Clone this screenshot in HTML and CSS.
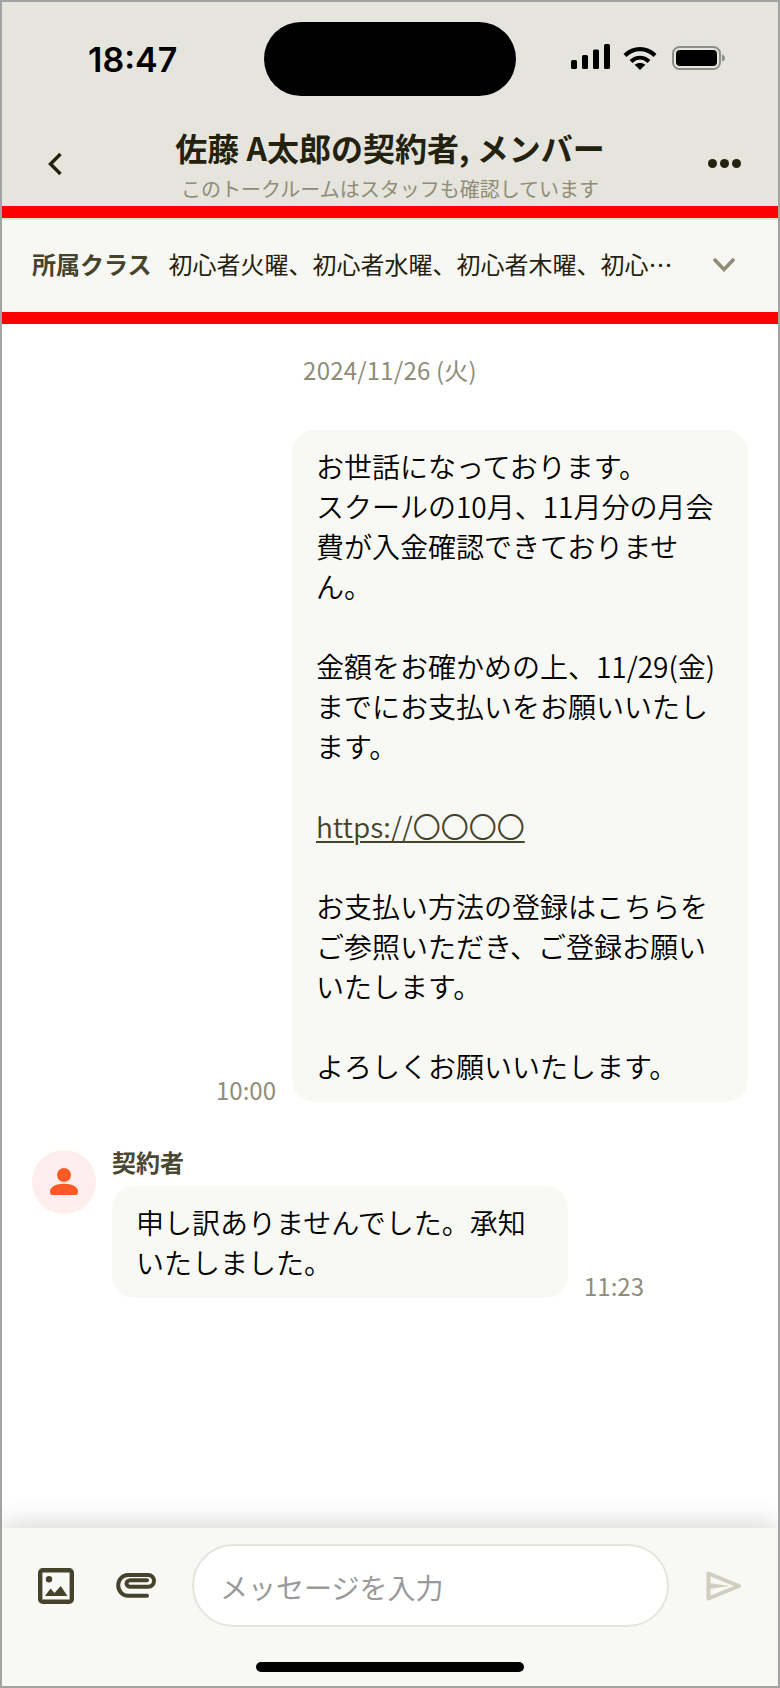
FILE: index.html
```html
<!DOCTYPE html>
<html lang="ja">
<head>
<meta charset="utf-8">
<title>トークルーム</title>
<link rel="stylesheet" href="styles.css">
</head>
<body>
<div class="frame">
  <header class="top">
    <div class="status">
      <span class="clock">18:47</span>
      <div class="island"></div>
      <div class="status-icons">
        <svg class="i-signal" viewBox="0 0 39 25"><rect x="0" y="16" width="6" height="9" rx="1.5"/><rect x="11" y="11" width="6" height="14" rx="1.5"/><rect x="22" y="5.500" width="6" height="19.500" rx="1.5"/><rect x="33" y="0" width="6" height="25" rx="1.5"/></svg>
        <svg class="i-wifi" viewBox="0 0 34 24"><path d="M2 9.500C10.500 1 23.500 1 32 9.500" fill="none" stroke="#000" stroke-width="4.200"/><path d="M8 15.500C13.500 10.500 20.500 10.500 26 15.500" fill="none" stroke="#000" stroke-width="4.200"/><path d="M11.700 18.800C14.700 16.300 19.300 16.300 22.300 18.800L17 24Z"/></svg>
        <svg class="i-battery" viewBox="0 0 53 24"><rect x="1" y="1" width="47" height="22" rx="6.500" fill="none" stroke="#8e8e8a" stroke-width="2"/><rect x="4" y="4" width="41" height="16" rx="4"/><path d="M50 8.500C52 9 53 10.500 53 12S52 15 50 15.500Z" fill="#8e8e8a"/></svg>
      </div>
    </div>
    <div class="navbar">
      <svg class="i-back" viewBox="0 0 16 24"><path d="M13.500 2L3.500 12L13.500 22" fill="none" stroke="#24220e" stroke-width="3.400"/></svg>
      <div class="heading">
        <h1 class="title">佐藤 A太郎の契約者, メンバー</h1>
        <p class="subtitle">このトークルームはスタッフも確認しています</p>
      </div>
      <div class="dots"><i></i><i></i><i></i></div>
    </div>
  </header>

  <section class="classbar">
    <span class="class-label">所属クラス</span>
    <span class="class-list">初心者火曜、初心者水曜、初心者木曜、初心…</span>
    <svg class="i-chevron" viewBox="0 0 24 15"><path d="M2 2L12 12.500L22 2" fill="none" stroke="#8f8c78" stroke-width="3.600"/></svg>
  </section>

  <main class="chat">
    <p class="date">2024/11/26 (火)</p>
    <div class="row row-out">
      <time class="stamp">10:00</time>
      <div class="bubble">お世話になっております。<br>スクールの10月、11月分の月会費が入金確認できておりません。<br><br>金額をお確かめの上、11/29(金)までにお支払いをお願いいたします。<br><br><a class="link" href="#">https://〇〇〇〇</a><br><br>お支払い方法の登録はこちらをご参照いただき、ご登録お願いいたします。<br><br>よろしくお願いいたします。</div>
    </div>
    <div class="row row-in">
      <div class="avatar">
        <svg viewBox="0 0 28 28"><circle cx="14" cy="7" r="7"/><path d="M0 23.500C0 18.500 6 15.700 14 15.700S28 18.500 28 23.500V24.500C28 26 27 27 25.500 27H2.500C1 27 0 26 0 24.500Z"/></svg>
      </div>
      <div class="incoming">
        <div class="sender">契約者</div>
        <div class="incoming-line">
          <div class="bubble">申し訳ありませんでした。承知いたしました。</div>
          <time class="stamp">11:23</time>
        </div>
      </div>
    </div>
  </main>

  <footer class="composer">
    <div class="composer-row">
      <svg class="i-image" viewBox="0 0 36 36"><rect x="2.200" y="2.200" width="31.600" height="31.600" rx="2.500" fill="none" stroke="#45432c" stroke-width="4.400"/><circle cx="11" cy="11.300" r="3.200" fill="#45432c"/><path d="M7 28L12.500 20.500L16.500 25L22.700 18L29.500 28Z" fill="#45432c"/></svg>
      <svg class="i-clip" viewBox="0 0 40 25"><path d="M31 22.700H12C6 22.700 2.200 17.500 2.200 12.300S6 2 12 2H32C36 2 38 4.800 38 7.800S36 13.800 32 13.800H14.500C12 13.800 10.500 12 10.500 10.500S12 7.300 14.500 7.300H31" fill="none" stroke="#45432c" stroke-width="4" stroke-linecap="round"/></svg>
      <div class="field">メッセージを入力</div>
      <svg class="i-send" viewBox="0 0 36 30"><path d="M2.500 2.500L33 15L2.500 27.500Z" fill="none" stroke="#cfcebf" stroke-width="4" stroke-linejoin="round"/><path d="M2.500 12L24 15L2.500 18Z" fill="#cfcebf"/></svg>
    </div>
    <div class="home-bar"></div>
  </footer>
</div>
</body>
</html>
```

FILE: styles.css
```css
* { box-sizing: border-box; }
html, body { margin: 0; padding: 0; }
body {
  width: 780px;
  height: 1688px;
  background: #fff;
  font-family: "Noto Sans CJK JP", "Noto Sans", sans-serif;
  color: #111;
}
.frame {
  width: 780px;
  height: 1688px;
  border: 2px solid #a3a3a3;
  display: flex;
  flex-direction: column;
  overflow: hidden;
}

/* header */
.top { background: #e5e4dd; height: 204px; flex: none; }
.status {
  height: 108px;
  position: relative;
  display: flex;
  align-items: flex-start;
  justify-content: space-between;
  padding: 0 0 0 86px;
}
.clock {
  font-family: Inter, sans-serif;
  font-weight: 600;
  font-size: 34px;
  line-height: 40px;
  margin-top: 38px;
  color: #000;
}
.island {
  position: absolute;
  left: 262px;
  top: 20px;
  width: 252px;
  height: 74px;
  border-radius: 37px;
  background: #000;
}
.status-icons {
  display: flex;
  align-items: flex-start;
  gap: 13px;
  padding-right: 53px;
  margin-top: 42px;
}
.i-signal { width: 39px; height: 25px; }
.i-wifi { width: 34px; height: 24px; margin-top: 2px; }
.i-battery { width: 53px; height: 24px; margin-top: 2px; margin-left: 2px; }

.navbar {
  height: 96px;
  display: flex;
  align-items: flex-start;
  justify-content: space-between;
  padding: 0 37px 0 45px;
}
.i-back { width: 16px; height: 24px; margin-top: 42px; flex: none; }
.heading { text-align: center; flex: 1; padding-left: 9px; }
.title {
  margin: 15px 0 0;
  font-size: 32px;
  line-height: 44px;
  font-weight: 700;
  color: #24220e;
}
.subtitle {
  margin: 5px 0 0;
  font-size: 20px;
  line-height: 30px;
  color: #8f8c78;
}
.dots { display: flex; gap: 3px; margin-top: 49px; flex: none; }
.dots i { width: 9px; height: 9px; border-radius: 50%; background: #24220e; }

/* class bar */
.classbar {
  height: 118px;
  flex: none;
  border-top: 12px solid #ff0000;
  border-bottom: 12px solid #ff0000;
  background: #f7f8f4;
  box-shadow: inset 0 2px 0 #e5e4dd;
  display: flex;
  align-items: center;
  padding: 0 42px 2px 30px;
  font-size: 24px;
  line-height: 36px;
}
.class-label { font-weight: 700; color: #45432c; flex: none; margin-right: 17px; }
.class-list { white-space: nowrap; color: #24220e; flex: none; }
.i-chevron { width: 24px; height: 15px; margin-left: auto; flex: none; }

/* chat */
.chat { flex: 1; background: #fff; padding: 28px 30px 0; }
.date {
  margin: 0 0 42px;
  text-align: center;
  font-size: 24px;
  line-height: 36px;
  letter-spacing: 0.2px;
  color: #8f8c78;
}
.row { display: flex; }
.row-out { justify-content: flex-end; align-items: flex-end; gap: 16px; }
.row-in { margin-top: 48px; gap: 16px; }
.bubble {
  width: 456px;
  background: #f8f9f5;
  border-radius: 22px;
  padding: 16px 24px;
  font-size: 28px;
  line-height: 40px;
  font-weight: 350;
  color: #000;
}
.stamp { font-size: 24px; line-height: 24px; color: #8f8c78; flex: none; }
.link { color: #45432c; text-decoration: underline; text-underline-offset: 3px; text-decoration-thickness: 1.5px; }
.avatar {
  width: 64px;
  height: 64px;
  border-radius: 50%;
  background: #ffeeeb;
  flex: none;
  display: flex;
  align-items: center;
  justify-content: center;
}
.avatar svg { width: 28px; height: 28px; fill: #ff5a26; }
.incoming { display: flex; flex-direction: column; }
.sender {
  font-size: 24px;
  line-height: 24px;
  margin-bottom: 12px;
  font-weight: 700;
  color: #4a4833;
}
.incoming-line { display: flex; align-items: flex-end; gap: 16px; }

/* composer */
.composer {
  flex: none;
  height: 158px;
  background: #f8f9f5;
  box-shadow: 0 -6px 24px rgba(0, 0, 0, 0.14);
  position: relative;
}
.composer-row {
  display: flex;
  align-items: center;
  height: 83px;
  padding-left: 36px;
  position: relative;
  top: 16px;
}
.i-image { width: 36px; height: 36px; flex: none; }
.i-clip { width: 40px; height: 25px; flex: none; margin-left: 42px; }
.field {
  width: 477px;
  height: 83px;
  margin-left: 36px;
  flex: none;
  border: 2px solid #e5e4dd;
  border-radius: 42px;
  background: #fff;
  padding: 2px 0 0 26px;
  font-size: 28px;
  line-height: 79px;
  color: #999;
}
.i-send { width: 36px; height: 30px; flex: none; margin-left: 37px; }
.home-bar {
  position: absolute;
  left: 254px;
  top: 134px;
  width: 268px;
  height: 10px;
  border-radius: 5px;
  background: #000;
}
```
